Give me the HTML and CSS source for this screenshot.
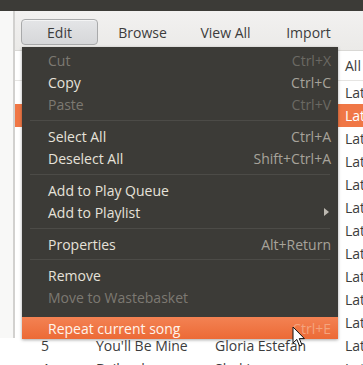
FILE: index.html
```html
<!DOCTYPE html>
<html>
<head>
<meta charset="utf-8">
<link rel="stylesheet" href="styles.css">
</head>
<body>
<div class="screen">
  <div class="topbar"></div>
  <div class="window">
    <aside class="side"></aside>
    <main class="content">
      <div class="toolbar">
        <div class="tb active">Edit</div>
        <div class="tb">Browse</div>
        <div class="tb">View All</div>
        <div class="tb">Import</div>
      </div>
      <div class="list">
        <div class="row head"><span class="c-num"></span><span class="c-title"></span><span class="c-artist"></span><span class="c-genre">All</span></div>
        <div class="row"><span class="c-num">16</span><span class="c-title">Mi Tierra</span><span class="c-artist">Gloria Estefan</span><span class="c-genre">Latin</span></div>
        <div class="row sel"><span class="c-num">15</span><span class="c-title">Hoy</span><span class="c-artist">Gloria Estefan</span><span class="c-genre">Latin</span></div>
        <div class="row"><span class="c-num">14</span><span class="c-title">Abriendo Puertas</span><span class="c-artist">Gloria Estefan</span><span class="c-genre">Latin</span></div>
        <div class="row"><span class="c-num">13</span><span class="c-title">Tres Deseos</span><span class="c-artist">Gloria Estefan</span><span class="c-genre">Latin</span></div>
        <div class="row"><span class="c-num">12</span><span class="c-title">Con Los Años</span><span class="c-artist">Gloria Estefan</span><span class="c-genre">Latin</span></div>
        <div class="row"><span class="c-num">11</span><span class="c-title">Oye</span><span class="c-artist">Gloria Estefan</span><span class="c-genre">Latin</span></div>
        <div class="row"><span class="c-num">10</span><span class="c-title">No Me Dejes</span><span class="c-artist">Gloria Estefan</span><span class="c-genre">Latin</span></div>
        <div class="row"><span class="c-num">9</span><span class="c-title">Cuando Hay Amor</span><span class="c-artist">Gloria Estefan</span><span class="c-genre">Latin</span></div>
        <div class="row"><span class="c-num">8</span><span class="c-title">Santo Santo</span><span class="c-artist">Gloria Estefan</span><span class="c-genre">Latin</span></div>
        <div class="row"><span class="c-num">7</span><span class="c-title">Mas Allá</span><span class="c-artist">Gloria Estefan</span><span class="c-genre">Latin</span></div>
        <div class="row"><span class="c-num">6</span><span class="c-title">Lucharé</span><span class="c-artist">Gloria Estefan</span><span class="c-genre">Latin</span></div>
        <div class="row"><span class="c-num">5</span><span class="c-title">You'll Be Mine</span><span class="c-artist">Gloria Estefan</span><span class="c-genre">Latin</span></div>
        <div class="row"><span class="c-num">4</span><span class="c-title">Bailando</span><span class="c-artist">Shakira</span><span class="c-genre">Latin</span></div>
      </div>
    </main>
  </div>

  <div class="menu">
    <div class="mi dis"><span>Cut</span><span class="acc">Ctrl+X</span></div>
    <div class="mi"><span>Copy</span><span class="acc">Ctrl+C</span></div>
    <div class="mi dis"><span>Paste</span><span class="acc">Ctrl+V</span></div>
    <div class="sep"></div>
    <div class="mi"><span>Select All</span><span class="acc">Ctrl+A</span></div>
    <div class="mi"><span>Deselect All</span><span class="acc">Shift+Ctrl+A</span></div>
    <div class="sep"></div>
    <div class="mi"><span>Add to Play Queue</span><span class="acc"></span></div>
    <div class="mi"><span>Add to Playlist</span><span class="arrow"></span></div>
    <div class="sep"></div>
    <div class="mi"><span>Properties</span><span class="acc">Alt+Return</span></div>
    <div class="sep s9"></div>
    <div class="mi"><span>Remove</span><span class="acc"></span></div>
    <div class="mi dis"><span>Move to Wastebasket</span><span class="acc"></span></div>
    <div class="sep s9 noline"></div>
    <div class="mi hl"><span>Repeat current song</span><span class="acc">Ctrl+E</span></div>
  </div>

  <svg class="cursor" width="14" height="22" viewBox="0 0 14 22">
    <path d="M1 1 L1 17 L4.8 13.4 L7.6 20 L10 19 L7.3 12.6 L12.4 12.6 Z" fill="#ffffff" stroke="#111111" stroke-width="1" stroke-linejoin="round"/>
  </svg>
</div>
</body>
</html>
```

FILE: styles.css
```css
* { box-sizing: border-box; }
html, body { margin: 0; padding: 0; }
body {
  width: 363px;
  height: 365px;
  overflow: hidden;
  font-family: "Open Sans", "Noto Sans", "DejaVu Sans", sans-serif;
  font-size: 14px;
  background: #ffffff;
}
.screen {
  position: relative;
  width: 363px;
  height: 365px;
  overflow: hidden;
  display: flex;
  flex-direction: column;
}
.topbar {
  height: 11px;
  flex: none;
  background: #3c3b37;
}
.window {
  flex: 1;
  display: flex;
  min-height: 0;
}
.side {
  width: 15px;
  flex: none;
  background: #f8f8f7;
  border-right: 2px solid #d2d1cf;
  height: 327px;
}
.content {
  flex: 1;
  display: flex;
  flex-direction: column;
  min-width: 0;
}
.toolbar {
  height: 40px;
  flex: none;
  display: flex;
  gap: 6px;
  padding: 8px 0 0 6px;
  background: linear-gradient(#f2f1f0, #ebeae8);
  border-bottom: 1px solid #d9d8d5;
}
.tb {
  width: 77px;
  height: 26px;
  flex: none;
  display: flex;
  align-items: center;
  justify-content: center;
  color: #3c3c3c;
  border: 1px solid transparent;
  border-radius: 4px;
}
.tb.active {
  background: linear-gradient(#e4e5e7, #d6d7d9);
  border-color: #a9aaab;
  box-shadow: inset 0 1px 0 rgba(255,255,255,0.6);
}
.list {
  flex: 1;
  background: #ffffff;
  color: #3c3c3c;
}
.row {
  display: grid;
  grid-template-columns: 81px 119px 123px 1fr;
  height: 23px;
  align-items: center;
  white-space: nowrap;
  overflow: hidden;
}
.row.head {
  height: 30px;
  border-bottom: 1px solid #e6e5e3;
}
.row.sel {
  background: #f07746;
  color: #ffffff;
}
.c-num { padding-left: 26px; }
.c-genre { padding-left: 7px; overflow: hidden; }

.menu {
  position: absolute;
  left: 22px;
  top: 47px;
  width: 316px;
  height: 292px;
  padding-top: 2px;
  background: #3c3b37;
  box-shadow: 0 1px 3px rgba(0,0,0,0.35);
  display: flex;
  flex-direction: column;
}
.mi {
  height: 22px;
  flex: none;
  display: flex;
  align-items: center;
  justify-content: space-between;
  padding: 0 7px 0 26px;
  color: #e6e2da;
  white-space: nowrap;
}
.mi .acc { color: #a7a39b; }
.mi.dis { color: #7c7972; }
.mi.dis .acc { color: #6b6963; }
.mi.hl {
  background: linear-gradient(#f38253, #ec6a36);
  color: #fff4ec;
}
.mi.hl .acc { color: #f4a47e; }
.arrow {
  width: 0;
  height: 0;
  margin-right: 2px;
  border-top: 4px solid transparent;
  border-bottom: 4px solid transparent;
  border-left: 5px solid #bdb9b1;
}
.sep {
  height: 10px;
  flex: none;
  display: flex;
  align-items: center;
  padding: 0 8px;
}
.sep::before {
  content: "";
  flex: 1;
  height: 1px;
  background: #4c4b47;
}
.sep.s9 { height: 9px; }
.sep.noline::before { background: transparent; }

.cursor {
  position: absolute;
  left: 292px;
  top: 326px;
}
```
